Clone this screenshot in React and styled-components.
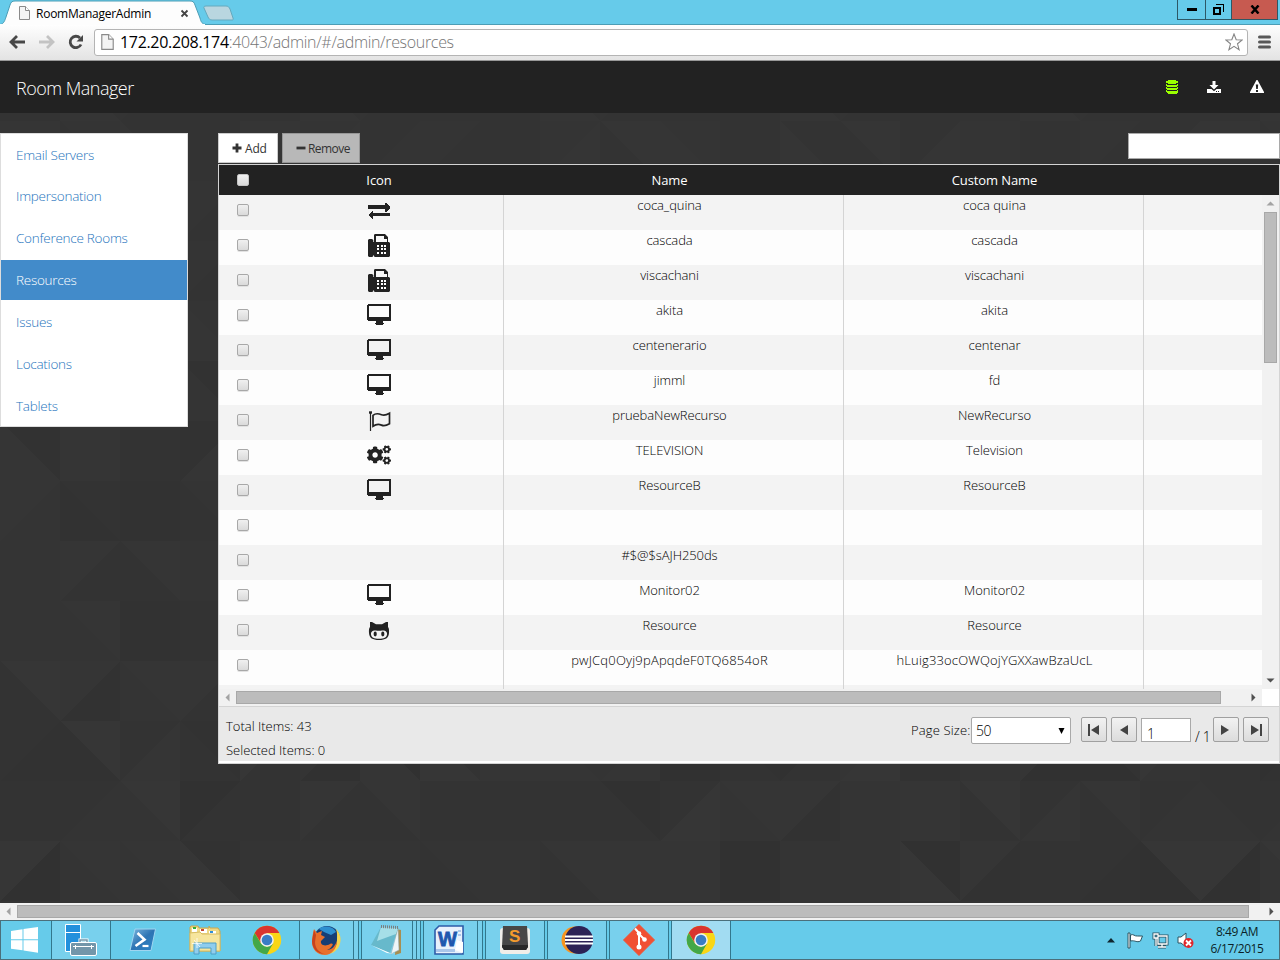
import React from 'react';
import styled, { createGlobalStyle, css } from 'styled-components';
import { FaCogs } from 'react-icons/fa';

const Global = createGlobalStyle`
  * { box-sizing: border-box; }
  body { margin: 0; overflow: hidden; background: #333; }
  #root { width: 1280px; height: 960px; }
`;

const Screen = styled.div`
  display: flex;
  flex-direction: column;
  width: 1280px;
  height: 960px;
  overflow: hidden;
  font-family: 'Open Sans', 'Noto Sans', sans-serif;
  font-weight: 300;
  font-size: 13px;
  color: #000;
`;

/* ---------- browser chrome ---------- */

const TabStrip = styled.div`
  display: flex;
  justify-content: space-between;
  height: 25px;
  background: #66cbea;
  box-shadow: inset 0 -1px #4c9db5;
  flex: none;
`;
const Tabs = styled.div`
  display: flex;
  position: relative;
`;
const TabShape = styled.svg`
  position: absolute;
  left: 0;
  top: 0;
`;
const TabLabel = styled.div`
  position: relative;
  display: flex;
  align-items: center;
  width: 205px;
  height: 25px;
  padding: 1px 0 0 19px;
  color: #000;
  font-weight: 400;
  font-size: 12px;
`;
const TabTitle = styled.span`
  width: 150px;
  padding-left: 6px;
  letter-spacing: -0.25px;
`;
const WindowButtons = styled.div`
  display: flex;
  height: 20px;
  margin-right: 2px;
  border: 1px solid #2d5866;
  border-top: 0;
`;
const WindowButton = styled.div`
  display: flex;
  align-items: center;
  justify-content: center;
  width: ${(p) => p.$w}px;
  background: ${(p) => (p.$close ? '#c75a50' : 'transparent')};
  & + & { border-left: 1px solid #2d5866; }
`;
const Toolbar = styled.div`
  display: flex;
  align-items: center;
  height: 36px;
  flex: none;
  padding: 0 8px 1px;
  background: linear-gradient(#fefefe, #e3e3e3);
  border-bottom: 1px solid #999;
`;
const NavIcons = styled.div`
  display: flex;
  width: 86px;
`;
const Address = styled.div`
  display: flex;
  align-items: center;
  width: 1154px;
  height: 27px;
  padding: 0 4px 0 6px;
  background: #fff;
  border: 1px solid #b4b4b4;
  border-radius: 3px;
`;
const Url = styled.span`
  flex: 1;
  padding-left: 6px;
  font-size: 16px;
  color: #757575;
  letter-spacing: -0.32px;
  b { font-weight: 400; color: #000; }
`;
const MenuIcon = styled.svg`
  margin-left: 10px;
`;

/* ---------- application ---------- */

const AppHeader = styled.header`
  display: flex;
  align-items: center;
  justify-content: space-between;
  height: 52px;
  flex: none;
  padding: 0 16px 0 16px;
  background: #222;
  color: #fff;
`;
const Brand = styled.h1`
  margin: 0;
  padding-top: 1px;
  font-size: 18px;
  font-weight: 300;
  letter-spacing: -0.52px;
`;
const HeaderIcons = styled.div`
  display: flex;
  align-items: center;
  gap: 29px;
`;
const Body = styled.main`
  position: relative;
  display: flex;
  align-items: flex-start;
  gap: 30px;
  height: 790px;
  flex: none;
  padding-top: 20px;
  background: #343434;
`;
const Backdrop = styled.svg`
  position: absolute;
  left: 0;
  top: 0;
`;
const Sidebar = styled.nav`
  position: relative;
  width: 188px;
  background: #fff;
  border: 1px solid #ddd;
`;
const SidebarItem = styled.a`
  display: flex;
  align-items: center;
  height: 42px;
  padding: 0 0 0 15px;
  font-size: 13.5px;
  letter-spacing: -0.26px;
  color: #1e74bd;
  &:first-child { height: 41px; }
  &:last-child { height: 41px; }
  ${(p) => p.$active && css`
    height: 40px;
    margin: 1px 0;
    background: #428bca;
    color: #fff;
  `}
`;
const Content = styled.section`
  position: relative;
  width: 1062px;
`;
const Actions = styled.div`
  display: flex;
  gap: 4px;
  height: 31px;
`;
const ActionButton = styled.button`
  display: flex;
  align-items: center;
  gap: 3px;
  width: ${(p) => p.$w}px;
  height: 30px;
  padding: 0 0 0 13px;
  font: 400 12px 'Open Sans', sans-serif;
  letter-spacing: ${(p) => p.$ls || 0}px;
  color: #333;
  background: #fff;
  border: 1px solid #ccc;
  ${(p) => p.$disabled && css`
    gap: 2px;
    background: #b8b8b8;
    border-color: #979797;
  `}
`;
const Search = styled.input`
  width: 152px;
  height: 26px;
  margin-left: auto;
  background: #fff;
  border: 1px solid #a9a9a9;
`;
const Grid = styled.div`
  height: 600px;
  border: 1px solid #d4d4d4;
  background: #fff;
`;
const GridHead = styled.div`
  display: flex;
  height: 30px;
  background: #222;
  color: #fff;
  font-weight: 400;
`;
const HeadCell = styled.div`
  width: ${(p) => p.$w}px;
  padding-top: 6px;
  text-align: center;
  letter-spacing: -0.1px;
`;
const Viewport = styled.div`
  display: flex;
  height: 494px;
`;
const Rows = styled.div`
  width: 1043px;
  height: 494px;
  overflow: hidden;
`;
const Row = styled.div`
  display: flex;
  height: 35px;
  background: #fdfdfd;
  &:nth-child(odd) { background: #f3f3f3; }
`;
const CheckCell = styled.div`
  width: 35px;
  padding: 9px 0 0 18px;
`;
const IconCell = styled.div`
  display: flex;
  justify-content: center;
  width: 250px;
  padding-top: 3px;
  border-right: 1px solid #d4d4d4;
  color: #222;
`;
const TextCell = styled.div`
  width: ${(p) => p.$w}px;
  padding: 1px ${(p) => p.$pr || 0}px 0 ${(p) => p.$pl || 0}px;
  text-align: center;
  border-right: 1px solid #d4d4d4;
  letter-spacing: ${(p) => p.$ls || 0}px;
`;
const Checkbox = styled.div`
  width: 12px;
  height: 12px;
  border: 1px solid #a8a8a8;
  border-radius: 2px;
  background: linear-gradient(#f0f0f0, #dadada);
  box-shadow: 0 1px #e2e2e2;
  ${(p) => p.$head && css`box-shadow: none; border-color: #c4c4c4;`}
`;
const VTrack = styled.div`
  display: flex;
  flex-direction: column;
  align-items: center;
  justify-content: space-between;
  width: 17px;
  background: #f1f1f1;
`;
const VThumb = styled.div`
  width: 13px;
  height: 151px;
  margin-bottom: auto;
  background: #bcbcbc;
  border: 1px solid #a8a8a8;
`;
const HTrack = styled.div`
  display: flex;
  align-items: center;
  width: ${(p) => p.$w}px;
  height: 17px;
  flex: none;
  background: #f1f1f1;
`;
const HThumb = styled.div`
  width: ${(p) => p.$w}px;
  height: 13px;
  margin-right: auto;
  background: #bcbcbc;
  border: 1px solid #a8a8a8;
`;
const GridFoot = styled.div`
  display: flex;
  justify-content: space-between;
  height: 55px;
  background: #e9e9e9;
  border-top: 1px solid #d4d4d4;
`;
const Totals = styled.div`
  padding: 7px 0 0 7px;
  line-height: 24px;
`;
const Pager = styled.div`
  display: flex;
  align-items: flex-start;
  padding: 10px 10px 0 0;
`;
const PagerLabel = styled.span`
  width: 60px;
  padding-top: 4px;
  letter-spacing: 0.15px;
  white-space: nowrap;
`;
const PageSize = styled.div`
  display: flex;
  align-items: center;
  justify-content: space-between;
  width: 100px;
  height: 27px;
  margin-right: 10px;
  padding: 0 4px;
  font-size: 14px;
  letter-spacing: -0.4px;
  background: #fff;
  border: 1px solid #a9a9a9;
  border-radius: 2px;
`;
const PageButton = styled.button`
  display: flex;
  align-items: center;
  justify-content: center;
  width: 26px;
  height: 25px;
  padding: 0;
  margin-right: ${(p) => p.$mr}px;
  background: linear-gradient(#f2f2f2, #dcdcdc);
  border: 1px solid #a0a0a0;
  border-radius: 2px;
`;
const PageInput = styled.div`
  width: 50px;
  height: 24px;
  margin-top: 1px;
  padding: 5px 0 0 5px;
  font-size: 14px;
  line-height: 20px;
  background: #fff;
  border: 1px solid #a9a9a9;
`;
const PageCount = styled.span`
  width: 22px;
  padding: 10px 0 0 4px;
  font-size: 14px;
  letter-spacing: -0.3px;
  white-space: nowrap;
`;

/* ---------- taskbar ---------- */

const Taskbar = styled.footer`
  display: flex;
  height: 40px;
  flex: none;
  background: #66cbea;
  border: 1px solid #4b6f7b;
`;
const TaskSlot = styled.div`
  display: flex;
  align-items: center;
  justify-content: center;
  width: ${(p) => p.$w}px;
  margin-right: ${(p) => p.$mr || 0}px;
  padding-right: ${(p) => p.$pr || 0}px;
  ${(p) => p.$open && css`
    background: ${p.$active ? '#a2dcf2' : '#78d0ed'};
    border: 1px solid #32778d;
    border-width: 0 1px;
  `}
`;
const StackEdge = styled.div`
  width: ${(p) => p.$w}px;
  margin-right: ${(p) => p.$mr || 0}px;
  background: #78d0ed;
  border-right: 1px solid #32778d;
`;
const Tray = styled.div`
  display: flex;
  align-items: center;
  gap: 8px;
  margin-left: auto;
  padding-right: 15px;
`;
const TrayToggle = styled.svg`
  margin-right: 4px;
`;
const Clock = styled.div`
  width: 54px;
  margin-left: 8px;
  font-size: 12px;
  font-weight: 400;
  line-height: 17px;
  letter-spacing: -0.45px;
  text-align: center;
  white-space: nowrap;
  color: #0b1f27;
`;

/* ---------- small drawings ---------- */

const Arrow = ({ dir, size = 4, color = '#505050', box = 17 }) => {
  const c = box / 2;
  const rot = { up: 0, right: 90, down: 180, left: 270 }[dir];
  return (
    <svg width={box} height={box}>
      <path d={`M${c - size} ${c + size / 2}h${size * 2}l${-size} ${-size}z`} fill={color} transform={`rotate(${rot} ${c} ${c})`} />
    </svg>
  );
};

const PageGlyph = ({ w = 11, h = 14 }) => (
  <svg width={w} height={h} viewBox="0 0 11 14">
    <path d="M.5.5h6l4 4v9H.5z" fill="#f4f4f4" stroke="#8a8a8a" />
    <path d="M6.5.5v4h4" fill="#fff" stroke="#8a8a8a" />
  </svg>
);

const Exchange = () => (
  <svg width="24" height="26" viewBox="0 0 24 26" fill="currentColor" shapeRendering="crispEdges">
    <path d="M1 7h17V5h1l4 4v1l-4 4h-1v-3H1zM23 15v3H6v3H5l-4-4 4-4h1v2z" />
  </svg>
);
const Fax = () => (
  <svg width="24" height="26" viewBox="0 0 24 26" fill="currentColor">
    <path d="M1 7l1-1h3l1.300 1v16l-1 1H2l-1-1zM6.800 9H7V1.800L8 1h10l3 3v5h1l1 1v13l-1 1H7.800l-1-1z" />
    <path d="M6 9h1v13H6z" />
    <path d="M9 3h8v3h3v3H9z" fill="#f8f8f8" />
    <path d="M10 12h2v2h-2zM14 12h2v2h-2zM17 12h2v2h-2zM10 15h2v2h-2zM14 15h2v2h-2zM17 15h2v2h-2zM10 19h2v2h-2zM14 19h2v2h-2zM17 19h2v2h-2z" fill="#fff" shapeRendering="crispEdges" />
  </svg>
);
const Monitor = () => (
  <svg width="24" height="26" viewBox="0 0 24 26" fill="currentColor" shapeRendering="crispEdges">
    <path fillRule="evenodd" d="M1 1h22l1 1v15l-1 1h-7v2h1v1h-1v1H9v-1H8v-1h1v-2H1l-1-1V2zM2 3v11h20V3z" />
  </svg>
);
const FlagOutline = () => (
  <svg width="24" height="26" viewBox="0 0 24 26" fill="none" stroke="currentColor">
    <path d="M3.500 4v19" strokeWidth="1.200" />
    <path d="M2 4.500h3" strokeWidth="2.400" />
    <path d="M6 7.300c3-2.500 5.800-1.700 8.500-.6 2.500 1 4.500.6 8-1.400v10.500c-3.500 2-5.500 2.400-8 1.300-2.700-1.200-5.500-1-8.500 1.100z" strokeWidth="1.700" />
  </svg>
);
const Octocat = () => (
  <svg width="24" height="26" viewBox="0 0 24 26">
    <path d="M3 4h2l4 2.200h6L19 4h2v5c1 1.300 1.200 3 1 6-.4 5-3.500 7-10 7S2.400 20 2 15c-.2-3 0-4.700 1-6z" fill="currentColor" />
    <path d="M7 12.500c2-.4 3 .3 5 .3s3-.7 5-.3c2.300.4 3.300 2 3 4-.4 3-3 4.300-8 4.300s-7.600-1.300-8-4.300c-.3-2 .7-3.600 3-4z" fill="#f3f3f3" />
    <ellipse cx="8.200" cy="16" rx="1.600" ry="2.400" fill="currentColor" />
    <ellipse cx="15.800" cy="16" rx="1.600" ry="2.400" fill="currentColor" />
  </svg>
);

const ICONS = {
  exchange: <Exchange />,
  fax: <Fax />,
  monitor: <Monitor />,
  flag: <FlagOutline />,
  cogs: <FaCogs size={24} />,
  octocat: <Octocat />,
};

/* ---------- faceted backdrop ---------- */

// Each facet: diagonal, shade left of it, shade right of it (grey levels in hex).
const FACETS = {
  5: '/37-36 \\36-33 /34-34 \\34-31',
  6: '\\35-31 \\35-35 \\32-32 /31-35',
  7: '/35-34 \\31-32 \\31-31 \\32-34',
  8: '/34-34 /36-32 \\32-36 /34-34',
  9: '/34-34 \\34-35 /31-31 /33-33',
  10: '\\33-37 /36-31 \\34-35 /35-33',
  11: '/33-31 \\31-37 /33-36 \\33-31 /37-33 /34-30 \\36-30 \\37-33 /35-36 \\35-34 /34-36 /30-30 \\33-31 /30-32 /36-37 /31-31 \\34-34 /36-30 \\30-33 /37-34 /33-33 /30-31',
  12: '\\32-33 /33-34 \\34-37 /30-33 \\32-33 /35-33 \\33-35 /32-32 /32-32 \\33-32 \\32-30 /32-37 \\34-35 /36-31 /34-34 /36-36 \\32-37 /32-35 \\32-36 /32-34 \\34-33 /32-34',
  13: '/37-30 \\34-35 \\34-35 \\37-31 /34-34 /34-34 /34-34 \\33-34 /34-34 \\32-36 /35-35 \\36-35 /30-30 /34-34 /34-34 \\37-30 /35-31 /33-33 /33-31 \\30-37 /37-30 \\34-37',
};
const grey = (hex) => {
  const v = Math.round(52 + (parseInt(hex, 16) - 52) * 0.7);
  return `rgb(${v}, ${v}, ${v})`;
};
const Facets = () => {
  const shapes = [];
  for (let r = 0; r < 14; r += 1) {
    const known = FACETS[r] ? FACETS[r].split(' ') : [];
    for (let c = 0; c < 22; c += 1) {
      const n = (c * 7 + r * 11 + ((c * r) % 5) * 3) % 8;
      const code = known[c] || `${n % 2 ? '\\' : '/'}3${2 + (n % 4)}-3${2 + ((n + c) % 4)}`;
      const [a, b] = code.slice(1).split('-');
      const x = c * 60;
      const y = r * 60 - 52;
      const left = code[0] === '/' ? `M${x} ${y}h60l-60 60z` : `M${x} ${y}v60h60z`;
      shapes.push(
        <g key={`${r}-${c}`}>
          <rect x={x} y={y} width="60" height="60" fill={grey(b)} />
          <path d={left} fill={grey(a)} />
        </g>
      );
    }
  }
  return <Backdrop width="1280" height="790" shapeRendering="crispEdges">{shapes}</Backdrop>;
};

/* ---------- taskbar drawings ---------- */

const WindowsLogo = () => (
  <svg width="28" height="28" fill="#fff">
    <path d="M0 5l11.500-1.700v10H0zM12.500 3.100L27 1v12.300H12.500zM0 14.300h11.500v10L0 22.800zM12.500 14.300H27v12.400l-14.500-2.200z" />
  </svg>
);
const ServerManager = () => (
  <svg width="32" height="32">
    <path d="M.5.5h15v27H.5z" fill="#2390dc" stroke="#fff" />
    <path d="M0 8.500h15" stroke="#fff" />
    <path d="M15 18v-2h7v2" fill="none" stroke="#fff" strokeWidth="3" />
    <path d="M15 18v-2h7v2" fill="none" stroke="#7396aa" strokeWidth="1.500" />
    <rect x="5.500" y="18.500" width="26" height="13" rx="1.500" fill="#7396aa" stroke="#fff" />
    <path d="M8 22.500h21M10.500 21v4M26.500 21v4" stroke="#fff" />
  </svg>
);
const PowerShell = () => (
  <svg width="28" height="24">
    <defs>
      <linearGradient id="ps" x1="0" y1="0" x2="1" y2="1">
        <stop offset="0" stopColor="#7fb9e0" /><stop offset=".5" stopColor="#2d74b4" /><stop offset="1" stopColor="#2e86c8" />
      </linearGradient>
    </defs>
    <path d="M6 1h20.500l-4.500 21.500H1z" fill="url(#ps)" stroke="#9fd5f0" />
    <path d="M8.500 5l7 6.500-9 6.500" fill="none" stroke="#fff" strokeWidth="2.600" />
    <path d="M13.500 18h6" stroke="#fff" strokeWidth="2.200" />
  </svg>
);
const Explorer = () => (
  <svg width="32" height="30">
    <path d="M1 6V2l1-1h7l1 2h10V1l1 2h8l2 3v20H1z" fill="#eed883" stroke="#c8a650" />
    <path d="M3 3h5v4H3zM11 4h7v4h-7zM20 6h7v3h-7z" fill="#fff" />
    <path d="M4 2h3v2H4z" fill="#2fae3a" /><path d="M12 4h3v2h-3z" fill="#c8472f" /><path d="M21 6h3v2h-3z" fill="#2f8fd8" />
    <path d="M1 8l10-1 2 2h18v17H1z" fill="#f6e59d" stroke="#d8bd64" />
    <path d="M5 29V18h22v11h-5v-6H10v6z" fill="#8fcdee" stroke="#4f9fc6" />
    <path d="M8 13v10M3 18.500h10M5 15l6 7" stroke="#fff" strokeOpacity=".75" />
  </svg>
);
const Chrome = () => (
  <svg width="30" height="30" viewBox="-15 -15 30 30">
    <circle r="14.200" fill="#f9d616" />
    <path d="M0-7H12.400A14.200 14.200 0 0 0-12.300-7.100L-6 3z" fill="#da342e" />
    <path d="M-12.300-7.100A14.200 14.200 0 0 0 0 14.200L6 3.500 0 7-6 3.500z" fill="#43a748" />
    <circle r="6.800" fill="#f2f2f2" />
    <circle r="5.300" fill="#3a7cc4" />
  </svg>
);
const Firefox = () => (
  <svg width="31" height="31">
    <circle cx="16" cy="14" r="13" fill="#163d75" />
    <path d="M8 4c4-4 14-3 17 3l-5 3-7-3z" fill="#2d8fd0" />
    <path d="M25 4c4 4 6 10 3.500 16C26 27 19 30 13 29c7-1 13-6 13-14 0-4 .5-7-1-11z" fill="#f4d44c" />
    <path d="M3 4l3 4 5-2-1 4 4 2-4 4c-1 4 4 6 9 3 2-1 4 0 2 2-1 2-3 3-5 4 5 0 8-4 10-9 0 8-6 14-12 14C6 30 1 24 1 17 1 12 2 8 3 4z" fill="#e8702c" />
    <path d="M3 5l2 5-1 7c0 6 4 11 10 12C6 29 1 23 1 16z" fill="#c7431e" />
  </svg>
);
const Notepad = () => (
  <svg width="32" height="31">
    <path d="M26 4l5 1v23l-6 2z" fill="#a78e52" />
    <path d="M28 3l1 22-8 4z" fill="#eef5f7" stroke="#8aa4ad" strokeWidth=".5" />
    <path d="M11 2l17 1-8 25L1 20z" fill="#67b9cb" />
    <path d="M11 2l17 1-2 6L7 16z" fill="#a6dfe8" />
    <path d="M1 20l19 8 6 1-9-1z" fill="#fff" />
    <path d="M11 1.500l17 1" stroke="#7c7c7c" strokeWidth="3" strokeDasharray="1 1" />
  </svg>
);
const Word = () => (
  <svg width="30" height="30">
    <path d="M1 5l4-4h24v28H1z" fill="#e8f1fc" stroke="#2d5ca8" strokeWidth="1.600" />
    <path d="M2 24h19v3H2zM24 5h3v2h-3zM24 9h3v2h-3z" fill="#aac6ea" />
    <text x="4" y="21" fontFamily="Liberation Sans, sans-serif" fontWeight="700" fontSize="20" textLength="19" lengthAdjust="spacingAndGlyphs" fill="#1e57ae" stroke="#1e57ae" strokeWidth=".8">W</text>
    <path d="M23 15l6 2v11l-8-3z" fill="#fff" />
  </svg>
);
const Sublime = () => (
  <svg width="32" height="30">
    <rect x="1" y="3" width="30" height="26" rx="3" fill="#f0eee9" />
    <path d="M4 1h24l1 18v3l-2 3H5l-2-3z" fill="#474747" />
    <path d="M3 20h26v2l-2 3H5l-2-3z" fill="#292929" />
    <text x="10" y="17" fontFamily="Liberation Sans, sans-serif" fontWeight="700" fontSize="17" fill="#f59b2d">S</text>
  </svg>
);
const Eclipse = () => (
  <svg width="32" height="30">
    <circle cx="14" cy="15" r="13.500" fill="#f7941e" />
    <circle cx="18" cy="15" r="14" fill="#2c2255" />
    <path d="M4 11.500h28M4 15h28M4 18.500h28" stroke="#fff" strokeWidth="1.800" />
  </svg>
);
const Git = () => (
  <svg width="32" height="32">
    <path d="M16 .5L31.500 16 16 31.500.5 16z" fill="#f05033" stroke="#f05033" strokeLinejoin="round" />
    <path d="M12 4.500l4 4.500v14M16 10l5 5" stroke="#fff" strokeWidth="2" fill="none" />
    <circle cx="16" cy="9.500" r="2.300" fill="#fff" /><circle cx="16" cy="23" r="2.500" fill="#fff" /><circle cx="21.500" cy="15.500" r="2.300" fill="#fff" />
  </svg>
);

/* ---------- data ---------- */

const NAV = ['Email Servers', 'Impersonation', 'Conference Rooms', 'Resources', 'Issues', 'Locations', 'Tablets'];
const RESOURCES = [
  ['exchange', 'coca_quina', 'coca quina'],
  ['fax', 'cascada', 'cascada'],
  ['fax', 'viscachani', 'viscachani'],
  ['monitor', 'akita', 'akita'],
  ['monitor', 'centenerario', 'centenar'],
  ['monitor', 'jimml', 'fd'],
  ['flag', 'pruebaNewRecurso', 'NewRecurso'],
  ['cogs', 'TELEVISION', 'Television'],
  ['monitor', 'ResourceB', 'ResourceB'],
  [null, '', ''],
  [null, '#$@$sAJH250ds', ''],
  ['monitor', 'Monitor02', 'Monitor02'],
  ['octocat', 'Resource', 'Resource'],
  [null, 'pwJCq0Oyj9pApqdeF0TQ6854oR', 'hLuig33ocOWQojYGXXawBzaUcL'],
  [null, '', ''],
];

export default function App() {
  return (
    <Screen>
      <Global />
      <TabStrip>
        <Tabs>
          <TabShape width="240" height="25">
            <path d="M0 24.500C4 24 5 20 6 17l4-12c1-3 2-4 5-4h175c3 0 4 1 5 4l5 13c1 4 2 6 6 6.500z" fill="#fdfdfd" stroke="#4c9db5" />
            <path d="M0 25h205" stroke="#fdfdfd" strokeWidth="2" />
            <path d="M206 6h20c2 0 3 1 4 3l3 9c.5 1.500 0 2-1 2h-20c-2 0-3-1-4-3l-4-9c-.5-1 0-2 2-2z" fill="#b9d6e0" stroke="#64a9be" />
          </TabShape>
          <TabLabel>
            <PageGlyph />
            <TabTitle>RoomManagerAdmin</TabTitle>
            <svg width="9" height="9"><path d="M1.500 1.500l6 6M7.500 1.500l-6 6" stroke="#444" strokeWidth="1.800" /></svg>
          </TabLabel>
        </Tabs>
        <WindowButtons>
          <WindowButton $w={27}><svg width="10" height="3"><path d="M0 0h10v3H0z" /></svg></WindowButton>
          <WindowButton $w={26}>
            <svg width="11" height="11" fill="none" stroke="#000" shapeRendering="crispEdges">
              <path d="M1 4h6v6H1z" strokeWidth="2" /><path d="M3 .5h7.500V8" />
            </svg>
          </WindowButton>
          <WindowButton $w={46} $close><svg width="10" height="9"><path d="M1.500.500l7 8M8.500.500l-7 8" stroke="#000" strokeWidth="2.500" /></svg></WindowButton>
        </WindowButtons>
      </TabStrip>

      <Toolbar>
        <NavIcons>
          <svg width="86" height="20" fill="none" strokeWidth="2.800">
            <path d="M17 10H4M9 4l-6 6 6 6" stroke="#484848" />
            <path d="M31 10h13M39 4l6 6-6 6" stroke="#c3c3c3" />
            <path d="M72 6A5.700 5.700 0 1 0 73 12.500" stroke="#484848" />
            <path d="M75 3v6.500h-6.500z" fill="#484848" />
          </svg>
        </NavIcons>
        <Address>
          <PageGlyph w={13} h={16} />
          <Url><b>172.20.208.174</b>:4043/admin/#/admin/resources</Url>
          <svg width="18" height="18" viewBox="0 0 18 18"><path d="M9 1l2.200 5.700 6 .3-4.700 3.800 1.600 5.900L9 13.400l-5.100 3.300 1.600-5.900L.8 7l6-.3z" fill="#fff" stroke="#858585" strokeWidth="1.100" /></svg>
        </Address>
        <MenuIcon width="13" height="14"><path d="M1.500 2h10M1.500 7h10M1.500 12h10" stroke="#585858" strokeWidth="3" strokeLinecap="round" /></MenuIcon>
      </Toolbar>

      <AppHeader>
        <Brand>Room Manager</Brand>
        <HeaderIcons>
          <svg width="12" height="14" fill="#9bff00" shapeRendering="crispEdges">
            <path d="M2 0h8v1h2v2h-2v1H2V3H0V1h2zM0 4l2 1h8l2-1v2l-2 1H2L0 6zM0 7l2 1h8l2-1v2l-2 1H2L0 9zM0 10l2 1h8l2-1v2l-2 2H2l-2-2z" />
          </svg>
          <svg width="14" height="13" fill="#fff">
            <path d="M5.500 0h3v4h3L7 8.500 2.500 4h3z" />
            <path fillRule="evenodd" d="M0 8h4.500L7 10.300 9.500 8H14v4H0zM9 10v1h1v-1zm2 0v1h1v-1z" />
          </svg>
          <svg width="14" height="14" fill="#fff"><path fillRule="evenodd" d="M6.500 0h1L14 12v1H0v-1zM5.800 4.500l.4 4.500h1.600l.4-4.500zM6 10v2h2v-2z" /></svg>
        </HeaderIcons>
      </AppHeader>

      <Body>
        <Facets />
        <Sidebar>
          {NAV.map((item) => <SidebarItem key={item} $active={item === 'Resources'}>{item}</SidebarItem>)}
        </Sidebar>
        <Content>
          <Actions>
            <ActionButton $w={60} $ls={-0.2}>
              <svg width="10" height="10"><path d="M5 .5v9M.5 5h9" stroke="#333" strokeWidth="2.800" /></svg>Add
            </ActionButton>
            <ActionButton $w={78} $ls={-0.55} $disabled>
              <svg width="10" height="10"><path d="M.5 5h9" stroke="#333" strokeWidth="2.800" /></svg>Remove
            </ActionButton>
            <Search />
          </Actions>
          <Grid>
            <GridHead>
              <CheckCell><Checkbox $head /></CheckCell>
              <HeadCell $w={250}>Icon</HeadCell>
              <HeadCell $w={331}>Name</HeadCell>
              <HeadCell $w={319}>Custom Name</HeadCell>
            </GridHead>
            <Viewport>
              <Rows>
                {RESOURCES.map(([icon, name, custom], i) => (
                  <Row key={i}>
                    <CheckCell><Checkbox /></CheckCell>
                    <IconCell>{icon && ICONS[icon]}</IconCell>
                    <TextCell $w={340} $pr={8} $ls={name.length > 20 ? 0.2 : -0.08}>{name}</TextCell>
                    <TextCell $w={300} $pl={2} $ls={custom.length > 20 ? 0.15 : -0.03}>{custom}</TextCell>
                  </Row>
                ))}
              </Rows>
              <VTrack>
                <Arrow dir="up" color="#a3a3a3" />
                <VThumb />
                <Arrow dir="down" />
              </VTrack>
            </Viewport>
            <HTrack $w={1043}>
              <Arrow dir="left" color="#a3a3a3" />
              <HThumb $w={985} />
              <Arrow dir="right" />
            </HTrack>
            <GridFoot>
              <Totals>
                <div>Total Items: 43</div>
                <div>Selected Items: 0</div>
              </Totals>
              <Pager>
                <PagerLabel>Page Size:</PagerLabel>
                <PageSize>50<svg width="9" height="8"><path d="M1.500 1h6L4.500 7z" /></svg></PageSize>
                <PageButton $mr={4}><svg width="12" height="12" fill="#444"><path d="M0 0h2v12H0zM11 1v10L3 6z" /></svg></PageButton>
                <PageButton $mr={4}><svg width="10" height="10" fill="#444"><path d="M9 0v10L1 5z" /></svg></PageButton>
                <PageInput>1</PageInput>
                <PageCount>/ 1</PageCount>
                <PageButton $mr={4}><svg width="12" height="10" fill="#444"><path d="M1 0v10l8-5z" /></svg></PageButton>
                <PageButton $mr={0}><svg width="12" height="12" fill="#444"><path d="M10 0h2v12h-2zM1 1v10l8-5z" /></svg></PageButton>
              </Pager>
            </GridFoot>
          </Grid>
        </Content>
      </Body>
      <HTrack $w={1280}>
        <Arrow dir="left" color="#a3a3a3" />
        <HThumb $w={1232} />
        <Arrow dir="right" />
      </HTrack>

      <Taskbar>
        <TaskSlot $w={50} $pr={2}><WindowsLogo /></TaskSlot>
        <TaskSlot $w={60} $open><ServerManager /></TaskSlot>
        <TaskSlot $w={63}><PowerShell /></TaskSlot>
        <TaskSlot $w={62}><Explorer /></TaskSlot>
        <TaskSlot $w={63} $pr={2}><Chrome /></TaskSlot>
        <TaskSlot $w={55} $open><Firefox /></TaskSlot>
        <StackEdge $w={5} $mr={2} />
        <TaskSlot $w={52} $open $pr={2}><Notepad /></TaskSlot>
        <StackEdge $w={4} /><StackEdge $w={4} $mr={2} />
        <TaskSlot $w={55} $open $pr={4}><Word /></TaskSlot>
        <StackEdge $w={5} $mr={2} />
        <TaskSlot $w={60} $open $mr={2}><Sublime /></TaskSlot>
        <TaskSlot $w={60} $open $mr={2}><Eclipse /></TaskSlot>
        <TaskSlot $w={60} $open $mr={2}><Git /></TaskSlot>
        <TaskSlot $w={60} $open $active><Chrome /></TaskSlot>
        <Tray>
          <TrayToggle width="8" height="5"><path d="M0 4.500h8L4 0z" fill="#10262f" /></TrayToggle>
          <svg width="17" height="17" fill="#fff" stroke="#2a5361">
            <path d="M1 1h2v15H1z" /><path d="M3.500 3c3-1.500 4 1.500 7 1h5l-2 5c-4 2-5-1-10 0z" />
          </svg>
          <svg width="17" height="17" fill="none" stroke="#2a5361" strokeWidth="3">
            <path d="M6 4h9v8H6zM10 12v3M6 15h8M2 2h4v4H2zM4 6v8" />
            <path d="M6 4h9v8H6zM10 12v3M6 15h8M2 2h4v4H2zM4 6v8" stroke="#fff" strokeWidth="1.300" />
          </svg>
          <svg width="17" height="17">
            <path d="M1 5h3l5-4v14l-5-4H1z" fill="#fff" stroke="#2a5361" />
            <circle cx="11.500" cy="11" r="5" fill="#e0262b" /><path d="M9 8.500l5 5M14 8.500l-5 5" stroke="#fff" strokeWidth="1.800" />
          </svg>
          <Clock>8:49 AM<br />6/17/2015</Clock>
        </Tray>
      </Taskbar>
    </Screen>
  );
}
